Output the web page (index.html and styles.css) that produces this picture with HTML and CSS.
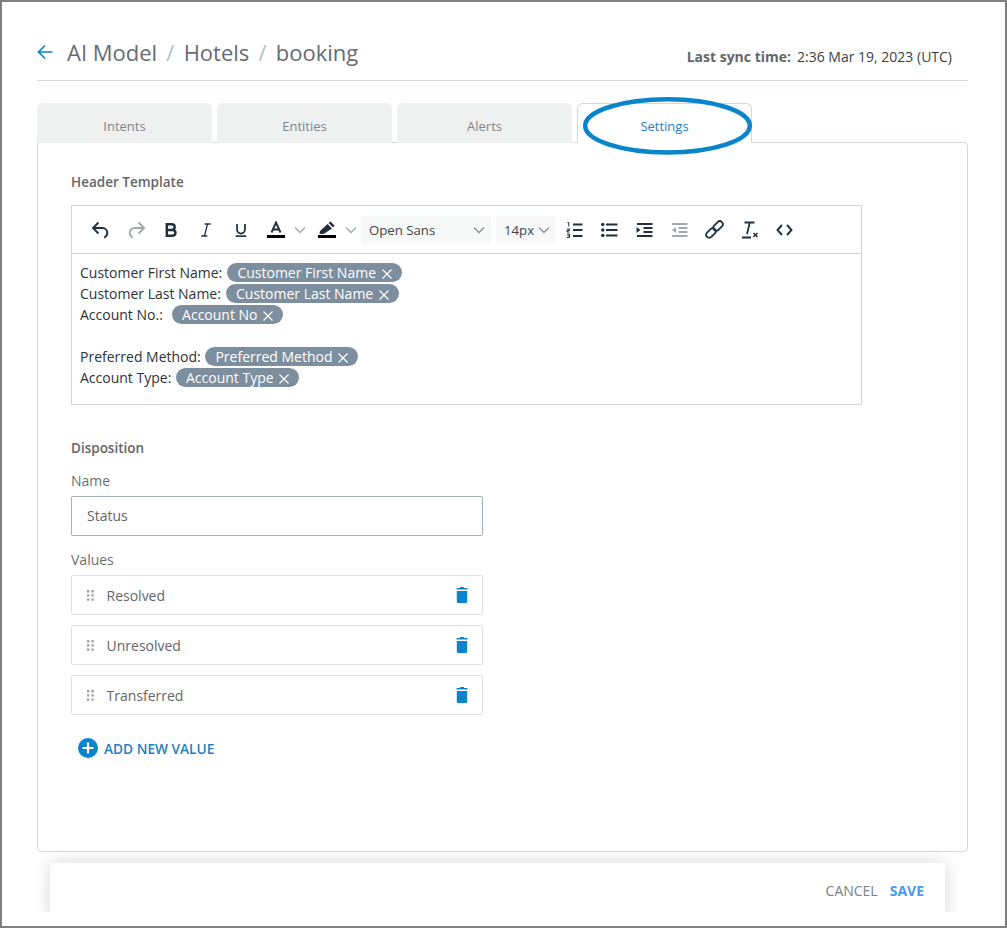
FILE: index.html
```html
<!DOCTYPE html>
<html lang="en">
<head>
  <meta charset="UTF-8">
  <title>AI Model - Settings</title>
  <link rel="stylesheet" href="styles.css">
</head>
<body>
  <div class="frame">
    <header class="page-header">
      <div class="crumbs">
        <svg class="back-icon" width="16" height="16" viewBox="0 0 16 16"><path d="M15.500 8H1.500M8 1.500L1.500 8L8 14.500" fill="none" stroke="#0a85cc" stroke-width="1.700"/></svg>
        <span>AI Model</span><span class="sep">/</span><span>Hotels</span><span class="sep">/</span><span>booking</span>
      </div>
      <div class="sync"><b>Last sync time:</b><span>2:36 Mar 19, 2023 (UTC)</span></div>
    </header>

    <div class="tabs">
      <div class="tab">Intents</div>
      <div class="tab">Entities</div>
      <div class="tab">Alerts</div>
      <div class="tab active">Settings</div>
    </div>

    <main class="panel">
      <h3 class="section-title">Header Template</h3>
      <div class="editor">
        <div class="toolbar">
          <svg class="tool undo" width="18" height="18" viewBox="0 0 18 18"><path d="M7.500 1.500L2 7L7.500 12.500M2 7H11.500a4.800 4.800 0 0 1 4.800 4.800c0 2-1 3.700-3 5" fill="none" stroke="#222f3e" stroke-width="1.900"/></svg>
          <svg class="tool redo" width="18" height="18" viewBox="0 0 18 18"><path d="M10.500 1.500L16 7L10.500 12.500M16 7H6.500a4.800 4.800 0 0 0-4.800 4.800c0 2 1 3.700 3 5" fill="none" stroke="#a3a8ae" stroke-width="1.900"/></svg>
          <svg class="tool bold" width="14" height="16" viewBox="-1 -1 16 18"><path d="M2.200 1.500H8a3.200 3.200 0 0 1 0 6.400H2.200zM2.200 7.900H8.800a3.300 3.300 0 0 1 0 6.600H2.200z" fill="none" stroke="#222f3e" stroke-width="2.800"/></svg>
          <svg class="tool italic" width="12" height="16" viewBox="-1 -1 14 18"><path d="M4.500 1h7M.5 15h7M7.800 1L4.200 15" fill="none" stroke="#222f3e" stroke-width="1.500"/></svg>
          <svg class="tool underline" width="14" height="16" viewBox="-1 -1 16 18"><path d="M2.500 1v6.500a4.500 4.500 0 0 0 9 0V1" fill="none" stroke="#222f3e" stroke-width="2"/><path d="M1 15h12" stroke="#222f3e" stroke-width="1.900"/></svg>
          <svg class="tool color" width="18" height="18" viewBox="0 0 18 18"><path d="M4.500 11.500L9 1.500L13.500 11.500M6 8.500H12" fill="none" stroke="#222f3e" stroke-width="1.900"/><path d="M0 15.500H18" stroke="#000" stroke-width="3"/></svg>
          <svg class="chev first" width="12" height="8" viewBox="0 0 12 8"><path d="M1 1.500L6 6.500L11 1.500" fill="none" stroke="#a3a8ae" stroke-width="1.300"/></svg>
          <svg class="tool marker" width="18" height="18" viewBox="0 0 18 18"><path d="M2 10L9.500 3L14 7.500L6.500 12.500L5 13H1.500z" fill="#222f3e"/><path d="M10.500 2L12.500 .5L16.500 4.500L15 6.500z" fill="#222f3e"/><path d="M0 15.500H18" stroke="#000" stroke-width="3"/></svg>
          <svg class="chev second" width="12" height="8" viewBox="0 0 12 8"><path d="M1 1.500L6 6.500L11 1.500" fill="none" stroke="#a3a8ae" stroke-width="1.300"/></svg>
          <div class="select font-select">Open Sans<svg width="12" height="8" viewBox="0 0 12 8"><path d="M1 1.500L6 6.500L11 1.500" fill="none" stroke="#8b9097" stroke-width="1.300"/></svg></div>
          <div class="select size-select">14px<svg width="12" height="8" viewBox="0 0 12 8"><path d="M1 1.500L6 6.500L11 1.500" fill="none" stroke="#8b9097" stroke-width="1.300"/></svg></div>
          <svg class="tool olist" width="17" height="16" viewBox="0 0 17 16"><path d="M7 2.500H16.500M7 8H16.500M7 14H16.500" stroke="#222f3e" stroke-width="1.900"/><path d="M1.500 .5H2.800V4.500M1 7H3.500V8.500H1V10H3.500M1 12H3.500V15.500H1M1.500 13.700H3.500" fill="none" stroke="#222f3e" stroke-width="1"/></svg>
          <svg class="tool ulist" width="17" height="14" viewBox="0 0 17 14"><path d="M5 2H16.500M5 7.500H16.500M5 13H16.500" stroke="#222f3e" stroke-width="1.900" transform="translate(0 -.5)"/><circle cx="1.800" cy="1.600" r="1.700" fill="#222f3e"/><circle cx="1.800" cy="7" r="1.700" fill="#222f3e"/><circle cx="1.800" cy="12.400" r="1.700" fill="#222f3e"/></svg>
          <svg class="tool indent" width="17" height="14" viewBox="0 0 17 14"><path d="M1 1H16.500M7.500 5H16.500M7.500 9H16.500M1 13H16.500" stroke="#222f3e" stroke-width="1.900"/><path d="M.5 4L4.500 7L.5 10z" fill="#222f3e"/></svg>
          <svg class="tool outdent" width="17" height="14" viewBox="0 0 17 14"><path d="M1 1H16.500M7.500 5H16.500M7.500 9H16.500M1 13H16.500" stroke="#a3a8ae" stroke-width="1.900"/><path d="M5 4L1 7L5 10z" fill="#a3a8ae"/></svg>
          <svg class="tool link" width="19" height="19" viewBox="0 0 19 19"><g fill="none" stroke="#222f3e" stroke-width="1.800" transform="rotate(-45 9.500 9.500)"><rect x="-1" y="6.500" width="11" height="6" rx="3"/><rect x="9" y="6.500" width="11" height="6" rx="3"/></g></svg>
          <svg class="tool clear" width="17" height="18" viewBox="0 0 17 18"><path d="M2.500 1.500H12.500M7.800 1.500L5 13M0 16.500H9" fill="none" stroke="#222f3e" stroke-width="1.800"/><path d="M11.500 12L15.500 16M15.500 12L11.500 16" stroke="#222f3e" stroke-width="1.500"/></svg>
          <svg class="tool code" width="17" height="12" viewBox="0 0 17 12"><path d="M6 1L1.500 6L6 11M11 1L15.500 6L11 11" fill="none" stroke="#222f3e" stroke-width="1.900"/></svg>
        </div>
        <div class="editor-body">
          <div class="line">Customer First Name: <span class="chip wide">Customer First Name<svg class="chip-x" width="10" height="10" viewBox="0 0 10 10"><path d="M.5 .5L9.500 9.500M9.500 .5L.5 9.500" stroke="#fff" stroke-width="1.200"/></svg></span></div>
          <div class="line">Customer Last Name: <span class="chip wide">Customer Last Name<svg class="chip-x" width="10" height="10" viewBox="0 0 10 10"><path d="M.5 .5L9.500 9.500M9.500 .5L.5 9.500" stroke="#fff" stroke-width="1.200"/></svg></span></div>
          <div class="line">Account No.:&nbsp; <span class="chip shifted">Account No<svg class="chip-x" width="10" height="10" viewBox="0 0 10 10"><path d="M.5 .5L9.500 9.500M9.500 .5L.5 9.500" stroke="#fff" stroke-width="1.200"/></svg></span></div>
          <div class="line">&nbsp;</div>
          <div class="line">Preferred Method: <span class="chip">Preferred Method<svg class="chip-x" width="10" height="10" viewBox="0 0 10 10"><path d="M.5 .5L9.500 9.500M9.500 .5L.5 9.500" stroke="#fff" stroke-width="1.200"/></svg></span></div>
          <div class="line">Account Type: <span class="chip">Account Type<svg class="chip-x" width="10" height="10" viewBox="0 0 10 10"><path d="M.5 .5L9.500 9.500M9.500 .5L.5 9.500" stroke="#fff" stroke-width="1.200"/></svg></span></div>
        </div>
      </div>

      <h3 class="section-title disposition">Disposition</h3>
      <div class="form">
        <label class="field-label">Name</label>
        <div class="name-input">Status</div>
        <label class="field-label values-label">Values</label>
        <div class="value-row"><svg class="grip" width="7" height="11" viewBox="0 0 7 11"><path d="M0 0h2.400v2.400H0zM4.400 0h2.400v2.400H4.400zM0 4.200h2.400v2.400H0zM4.400 4.200h2.400v2.400H4.400zM0 8.400h2.400v2.400H0zM4.400 8.400h2.400v2.400H4.400z" fill="#a0a0a0"/></svg><span class="value-name">Resolved</span><svg class="trash" width="12" height="16" viewBox="0 0 12 16"><path d="M4 0H8V1H11.500V2.500H.5V1H4zM.8 4H11.200V14.500A1.500 1.500 0 0 1 9.700 16H2.300A1.500 1.500 0 0 1 .8 14.500z" fill="#0a85cc"/></svg></div>
        <div class="value-row"><svg class="grip" width="7" height="11" viewBox="0 0 7 11"><path d="M0 0h2.400v2.400H0zM4.400 0h2.400v2.400H4.400zM0 4.200h2.400v2.400H0zM4.400 4.200h2.400v2.400H4.400zM0 8.400h2.400v2.400H0zM4.400 8.400h2.400v2.400H4.400z" fill="#a0a0a0"/></svg><span class="value-name">Unresolved</span><svg class="trash" width="12" height="16" viewBox="0 0 12 16"><path d="M4 0H8V1H11.500V2.500H.5V1H4zM.8 4H11.200V14.500A1.500 1.500 0 0 1 9.700 16H2.300A1.500 1.500 0 0 1 .8 14.500z" fill="#0a85cc"/></svg></div>
        <div class="value-row"><svg class="grip" width="7" height="11" viewBox="0 0 7 11"><path d="M0 0h2.400v2.400H0zM4.400 0h2.400v2.400H4.400zM0 4.200h2.400v2.400H0zM4.400 4.200h2.400v2.400H4.400zM0 8.400h2.400v2.400H0zM4.400 8.400h2.400v2.400H4.400z" fill="#a0a0a0"/></svg><span class="value-name">Transferred</span><svg class="trash" width="12" height="16" viewBox="0 0 12 16"><path d="M4 0H8V1H11.500V2.500H.5V1H4zM.8 4H11.200V14.500A1.500 1.500 0 0 1 9.700 16H2.300A1.500 1.500 0 0 1 .8 14.500z" fill="#0a85cc"/></svg></div>
      </div>
      <div class="add-value">
        <svg width="20" height="20" viewBox="0 0 20 20"><circle cx="10" cy="10" r="10" fill="#0a85cc"/><path d="M10 4.500V15.500M4.500 10H15.500" stroke="#fff" stroke-width="2.200"/></svg>
        <span>ADD NEW VALUE</span>
      </div>
    </main>

    <div class="footer-clip">
      <footer class="page-footer">
        <span class="cancel">CANCEL</span>
        <span class="save">SAVE</span>
      </footer>
    </div>

    <!-- callout drawn over the settings tab -->
    <svg class="callout" width="176" height="64" viewBox="0 0 176 64"><ellipse cx="85.500" cy="30.800" rx="82.300" ry="26.600" fill="none" stroke="#0a85cc" stroke-width="4.500"/></svg>
  </div>
</body>
</html>
```
FILE: styles.css
```css
* {
  box-sizing: border-box;
}

html, body {
  margin: 0;
  padding: 0;
}

body {
  font-family: 'Open Sans', sans-serif;
  font-size: 14px;
  color: #6b6f73;
  background: #fff;
}

.frame {
  position: relative;
  width: 1007px;
  height: 928px;
  border: 2px solid #808080;
  padding: 0 37px 0 35px;
  overflow: hidden;
}

.page-header {
  display: flex;
  justify-content: space-between;
  align-items: flex-end;
  height: 79px;
  padding-bottom: 13px;
  border-bottom: 1px solid #d3d9da;
}

.crumbs {
  display: flex;
  align-items: center;
  font-size: 22px;
  line-height: 30px;
  color: #666c72;
}

.back-icon {
  margin-right: 14px;
}

.sep {
  margin: 0 9.2px;
  color: #b8bfc7;
}

.sync {
  display: flex;
  gap: 6px;
  font-size: 14px;
  line-height: 20px;
  padding-right: 16px;
  color: #3c3f44;
}

.sync b {
  font-weight: 700;
  color: #63666a;
}

.tabs {
  display: flex;
  gap: 5px;
  margin-top: 22px;
  height: 40px;
  position: relative;
  z-index: 1;
}

.tab {
  width: 175px;
  height: 40px;
  padding-top: 14px;
  text-align: center;
  font-size: 13px;
  line-height: 18px;
  color: #7d858c;
  background: #eff1f1;
  border-radius: 6px 6px 0 0;
}

.tab.active {
  background: #fff;
  color: #1f80c4;
  border: 1px solid #d3d9da;
  border-bottom: 0;
  padding-top: 13px;
}

.panel {
  height: 710px;
  margin-top: -1px;
  padding: 29px 33px 0;
  border: 1px solid #d3d9da;
  border-radius: 0 4px 4px 4px;
}

.section-title {
  margin: 0;
  font-size: 13.5px;
  line-height: 20px;
  font-weight: 600;
  color: #63666a;
}

.editor {
  width: 791px;
  height: 200px;
  margin-top: 13px;
  border: 1px solid #d0d5d6;
}

.toolbar {
  display: flex;
  align-items: center;
  height: 48px;
  border-bottom: 1px solid #d0d5d6;
  padding-left: 19px;
}

.tool, .chev {
  flex: none;
}

.redo { margin-left: 19px; }
.bold { margin-left: 18px; }
.italic { margin-left: 22px; }
.underline { margin-left: 22px; }
.color { margin-left: 19px; }
.first { margin-left: 9px; }
.marker { margin-left: 12px; }
.second { margin-left: 9px; }
.olist { margin-left: 10px; }
.ulist { margin-left: 18px; }
.indent { margin-left: 18px; }
.outdent { margin-left: 18px; }
.link { margin-left: 17px; }
.clear { margin-left: 18px; }
.code { margin-left: 17px; }

.select {
  display: flex;
  align-items: center;
  justify-content: space-between;
  height: 28px;
  background: #f7f8f8;
  border-radius: 3px;
  font-size: 13.2px;
  color: #3e4650;
  padding: 0 6px 0 8px;
}

.font-select {
  width: 130px;
  margin-left: 4px;
}

.size-select {
  width: 60px;
  margin-left: 5px;
}

.editor-body {
  padding: 8px 8px 0;
  font-size: 14px;
  line-height: 21px;
  color: #2e3338;
}

.chip {
  display: inline-block;
  height: 19px;
  line-height: 19px;
  padding: 0 10px;
  margin-left: 1px;
  border-radius: 10px;
  background: #7d8e9e;
  color: #fff;
}

.chip.wide {
  padding-left: 10.5px;
  padding-right: 10.5px;
}

.chip.shifted {
  margin-left: 2px;
}

.chip-x {
  margin-left: 5.5px;
  vertical-align: -1px;
}

.disposition {
  margin-top: 33px;
}

.form {
  width: 412px;
}

.field-label {
  display: block;
  margin-top: 13px;
  font-size: 14px;
  line-height: 20px;
  color: #6b6f73;
}

.name-input {
  height: 40px;
  margin-top: 5px;
  padding-left: 15px;
  line-height: 38px;
  border: 1px solid #a6afb6;
  border-radius: 2px;
  color: #63666a;
}

.values-label {
  margin-top: 14px;
}

.value-row {
  display: flex;
  align-items: center;
  height: 40px;
  margin-top: 10px;
  padding: 0 14px 0 15px;
  border: 1px solid #dfe2e3;
  border-radius: 2px;
  color: #63666a;
}

.values-label + .value-row {
  margin-top: 5px;
}

.grip {
  margin-right: 12.5px;
}

.value-name {
  flex: 1;
}

.add-value {
  display: flex;
  align-items: center;
  gap: 6px;
  margin: 23px 0 0 7px;
  font-size: 13.7px;
  font-weight: 600;
  color: #1f80c4;
}

.footer-clip {
  width: 935px;
  height: 69px;
  margin-left: -2px;
  padding: 20px 20px 0;
  overflow: hidden;
  margin-top: -9px;
  position: relative;
}

.page-footer {
  display: flex;
  justify-content: flex-end;
  align-items: center;
  gap: 12px;
  width: 895px;
  margin-left: -5px;
  height: 60px;
  padding: 0 21px 6px 0;
  background: #fff;
  box-shadow: 0 0 16px rgba(0, 0, 0, 0.16);
  font-size: 14px;
}

.cancel {
  color: #7b8086;
}

.save {
  font-weight: 700;
  color: #4a9bf0;
}

.callout {
  position: absolute;
  left: 580px;
  top: 93px;
  z-index: 2;
}
```
